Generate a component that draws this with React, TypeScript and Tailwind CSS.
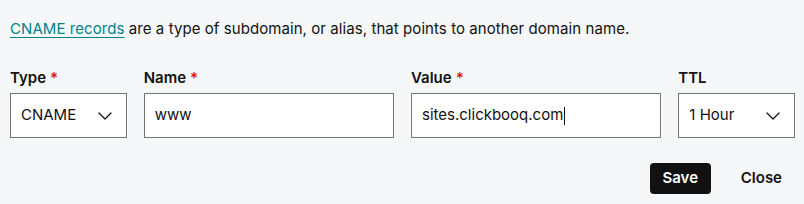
import React from "react";

function Chevron() {
  return (
    <svg width="14" height="8" viewBox="0 0 14 8" fill="none" className="shrink-0">
      <path d="M1 1l6 6 6-6" stroke="#111" strokeWidth="1.3" strokeLinecap="round" strokeLinejoin="round" />
    </svg>
  );
}

function Label({ text, required }: { text: string; required?: boolean }) {
  return (
    <div className="h-[22px] mb-[4px] text-[15px] font-semibold text-[#111] leading-[22px]">
      {text}
      {required && <span className="text-[#db1802] ml-[4px] font-semibold">*</span>}
    </div>
  );
}

export default function App() {
  return (
    <div className="w-[804px] h-[204px] bg-[#f5f7f8] text-[#111] overflow-hidden" style={{ fontFamily: "Inter, 'Noto Sans', sans-serif" }}>
      <div className="pl-[10px] pr-[9px] pt-[19px]">
        <p className="text-[15px] leading-[20px] text-[#111] tracking-[0.07px]">
          <a className="text-[#00838c] underline underline-offset-[3px]" href="#">CNAME records</a> are a type of subdomain, or alias, that points to another domain name.
        </p>
        <div className="flex gap-[17px] mt-[28px]">
          <div className="w-[117px]">
            <Label text="Type" required />
            <div className="h-[45px] border border-[#767676] bg-white flex items-center justify-between pl-[10px] pr-[14px] text-[15px]">
              <span>CNAME</span>
              <Chevron />
            </div>
          </div>
          <div className="w-[251px]">
            <Label text="Name" required />
            <div className="h-[45px] border border-[#767676] bg-white flex items-center pl-[10px] text-[15px]">
              www
            </div>
          </div>
          <div className="w-[251px]">
            <Label text="Value" required />
            <div className="h-[45px] border border-[#767676] bg-white flex items-center pl-[10px] text-[15px]">
              sites.clickbooq.com<span className="inline-block w-[1px] h-[18px] bg-[#111] ml-[1px]" />
            </div>
          </div>
          <div className="w-[117px]">
            <Label text="TTL" />
            <div className="h-[45px] border border-[#767676] bg-white flex items-center justify-between pl-[10px] pr-[14px] text-[15px]">
              <span>1 Hour</span>
              <Chevron />
            </div>
          </div>
        </div>
        <div className="flex justify-end items-center mt-[25px] pr-[13px] gap-[30px]">
          <button className="h-[31px] w-[61px] rounded-[4px] bg-[#111] text-white text-[15px] font-semibold">Save</button>
          <button className="text-[15px] font-semibold text-[#111]">Close</button>
        </div>
      </div>
    </div>
  );
}
